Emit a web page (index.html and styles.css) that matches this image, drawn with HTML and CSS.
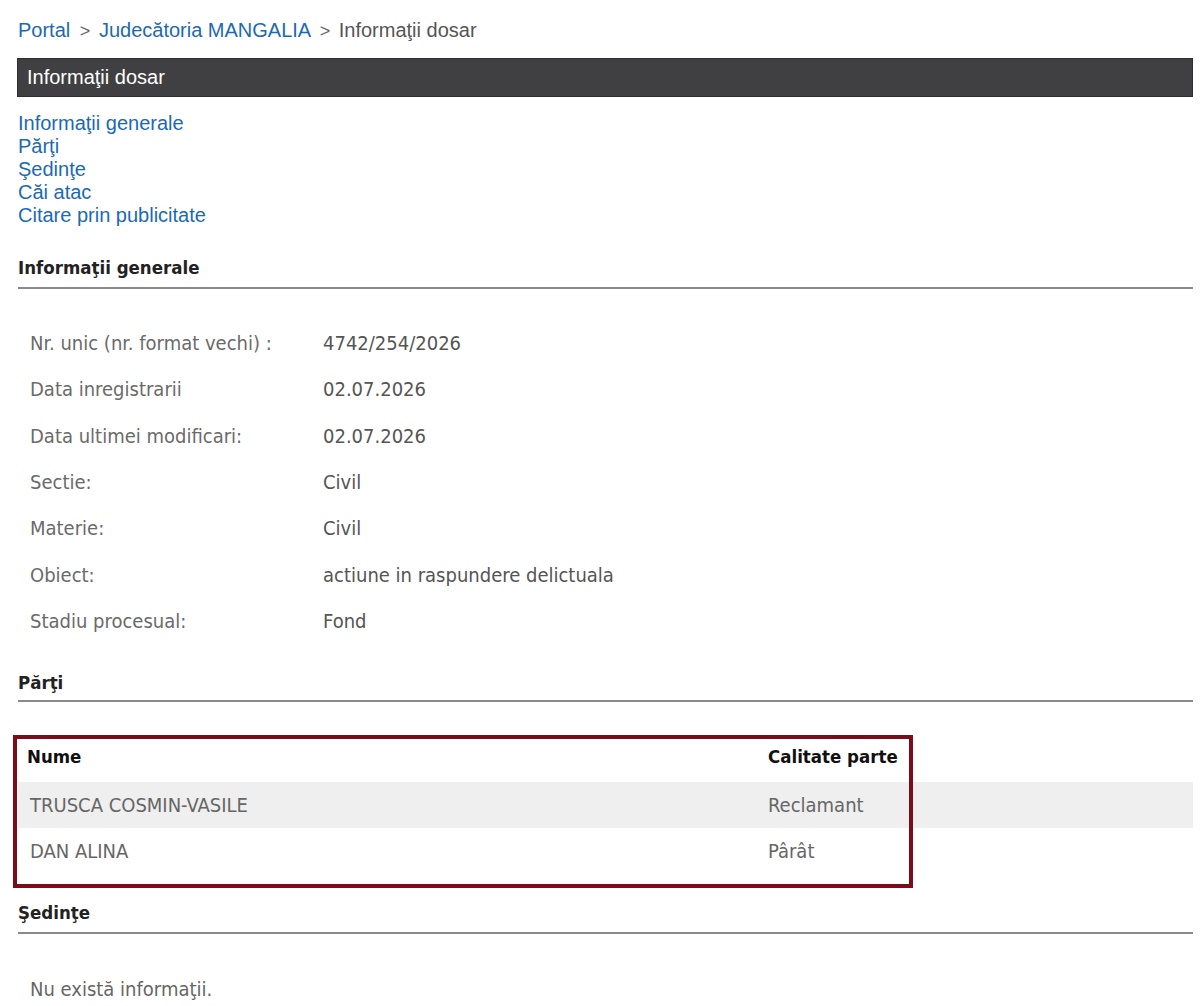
FILE: index.html
```html
<!DOCTYPE html>
<html lang="ro">
<head>
  <meta charset="UTF-8">
  <title>Informaţii dosar</title>
  <link rel="stylesheet" href="styles.css">
</head>
<body>
  <div class="page">
    <div class="breadcrumb">
      <a href="#">Portal</a>
      <span class="sep">&gt;</span>
      <a href="#">Judecătoria MANGALIA</a>
      <span class="sep">&gt;</span>
      <span class="current">Informaţii dosar</span>
    </div>

    <div class="title-bar">Informaţii dosar</div>

    <div class="toc">
      <a href="#generale">Informaţii generale</a>
      <a href="#parti">Părţi</a>
      <a href="#sedinte">Şedinţe</a>
      <a href="#cai">Căi atac</a>
      <a href="#citare">Citare prin publicitate</a>
    </div>

    <h3 class="section" id="generale">Informaţii generale</h3>
    <div class="info">
      <div class="label">Nr. unic (nr. format vechi) :</div><div class="value">4742/254/2026</div>
      <div class="label">Data inregistrarii</div><div class="value">02.07.2026</div>
      <div class="label">Data ultimei modificari:</div><div class="value">02.07.2026</div>
      <div class="label">Sectie:</div><div class="value">Civil</div>
      <div class="label">Materie:</div><div class="value">Civil</div>
      <div class="label">Obiect:</div><div class="value">actiune in raspundere delictuala</div>
      <div class="label">Stadiu procesual:</div><div class="value">Fond</div>
    </div>

    <h3 class="section" id="parti">Părţi</h3>
    <div class="parties">
      <div class="row head"><div>Nume</div><div>Calitate parte</div><div></div></div>
      <div class="row alt"><div>TRUSCA COSMIN-VASILE</div><div>Reclamant</div><div></div></div>
      <div class="row"><div>DAN ALINA</div><div>Pârât</div><div></div></div>
      <div class="highlight"></div>
    </div>

    <h3 class="section" id="sedinte">Şedinţe</h3>
    <p class="empty">Nu există informaţii.</p>
  </div>
</body>
</html>
```

FILE: styles.css
```css
body {
  margin: 0;
  background: #fff;
  font-family: "Liberation Sans", Arial, sans-serif;
}

.page {
  padding: 0 7px 0 18px;
}

a {
  color: #1b6ab3;
  text-decoration: none;
}

.breadcrumb {
  font-size: 20px;
  line-height: 23px;
  padding-top: 19px;
  height: 23px;
  color: #555;
}

.breadcrumb .sep {
  margin: 0 3px 0 4px;
  color: #666;
  font-size: 18px;
}

.title-bar {
  margin: 16px 0 0 -1px;
  height: 37px;
  line-height: 37px;
  background: #403f41;
  color: #fff;
  font-size: 20px;
  padding-left: 9px;
  border: 1px solid #2e2d2f;
}

.toc {
  display: flex;
  flex-direction: column;
  margin-top: 15px;
  font-size: 20px;
  line-height: 23px;
}

.section {
  margin: 0;
  font-family: "DejaVu Sans Condensed", "DejaVu Sans", sans-serif;
  font-size: 18.5px;
  line-height: 22px;
  font-weight: bold;
  color: #222;
  padding-bottom: 8px;
  border-bottom: 2px solid #8a8a8a;
}

#generale {
  margin-top: 30px;
}

.info {
  display: grid;
  grid-template-columns: 293px 1fr;
  grid-auto-rows: 46.3px;
  align-items: center;
  margin-top: 31px;
  padding-left: 12px;
  font-family: "DejaVu Sans Condensed", "DejaVu Sans", sans-serif;
  font-size: 20px;
  color: #6a6a6a;
}

.info .value {
  color: #555;
}

#parti {
  margin-top: 28px;
  padding-bottom: 6px;
}

.parties {
  position: relative;
  margin-top: 38px;
  font-family: "DejaVu Sans Condensed", "DejaVu Sans", sans-serif;
  font-size: 20px;
  color: #666;
}

.row {
  display: grid;
  grid-template-columns: 750px 150px 1fr;
  height: 46px;
  align-items: center;
}

.row > div:first-child {
  padding-left: 12px;
}

.row.head {
  height: 42px;
  color: #111;
  font-weight: bold;
  font-size: 18.5px;
  padding-bottom: 10px;
  box-sizing: border-box;
}

.row.head > div:first-child {
  padding-left: 9px;
}

.row.alt {
  background: #efefef;
}

.highlight {
  position: absolute;
  left: -5px;
  top: -5px;
  width: 892px;
  height: 145px;
  border: 4px solid #7b0c1c;
}

#sedinte {
  margin-top: 28px;
}

.empty {
  margin: 44px 0 0 12px;
  font-family: "DejaVu Sans Condensed", "DejaVu Sans", sans-serif;
  font-size: 20px;
  line-height: 23px;
  color: #666;
}
```
